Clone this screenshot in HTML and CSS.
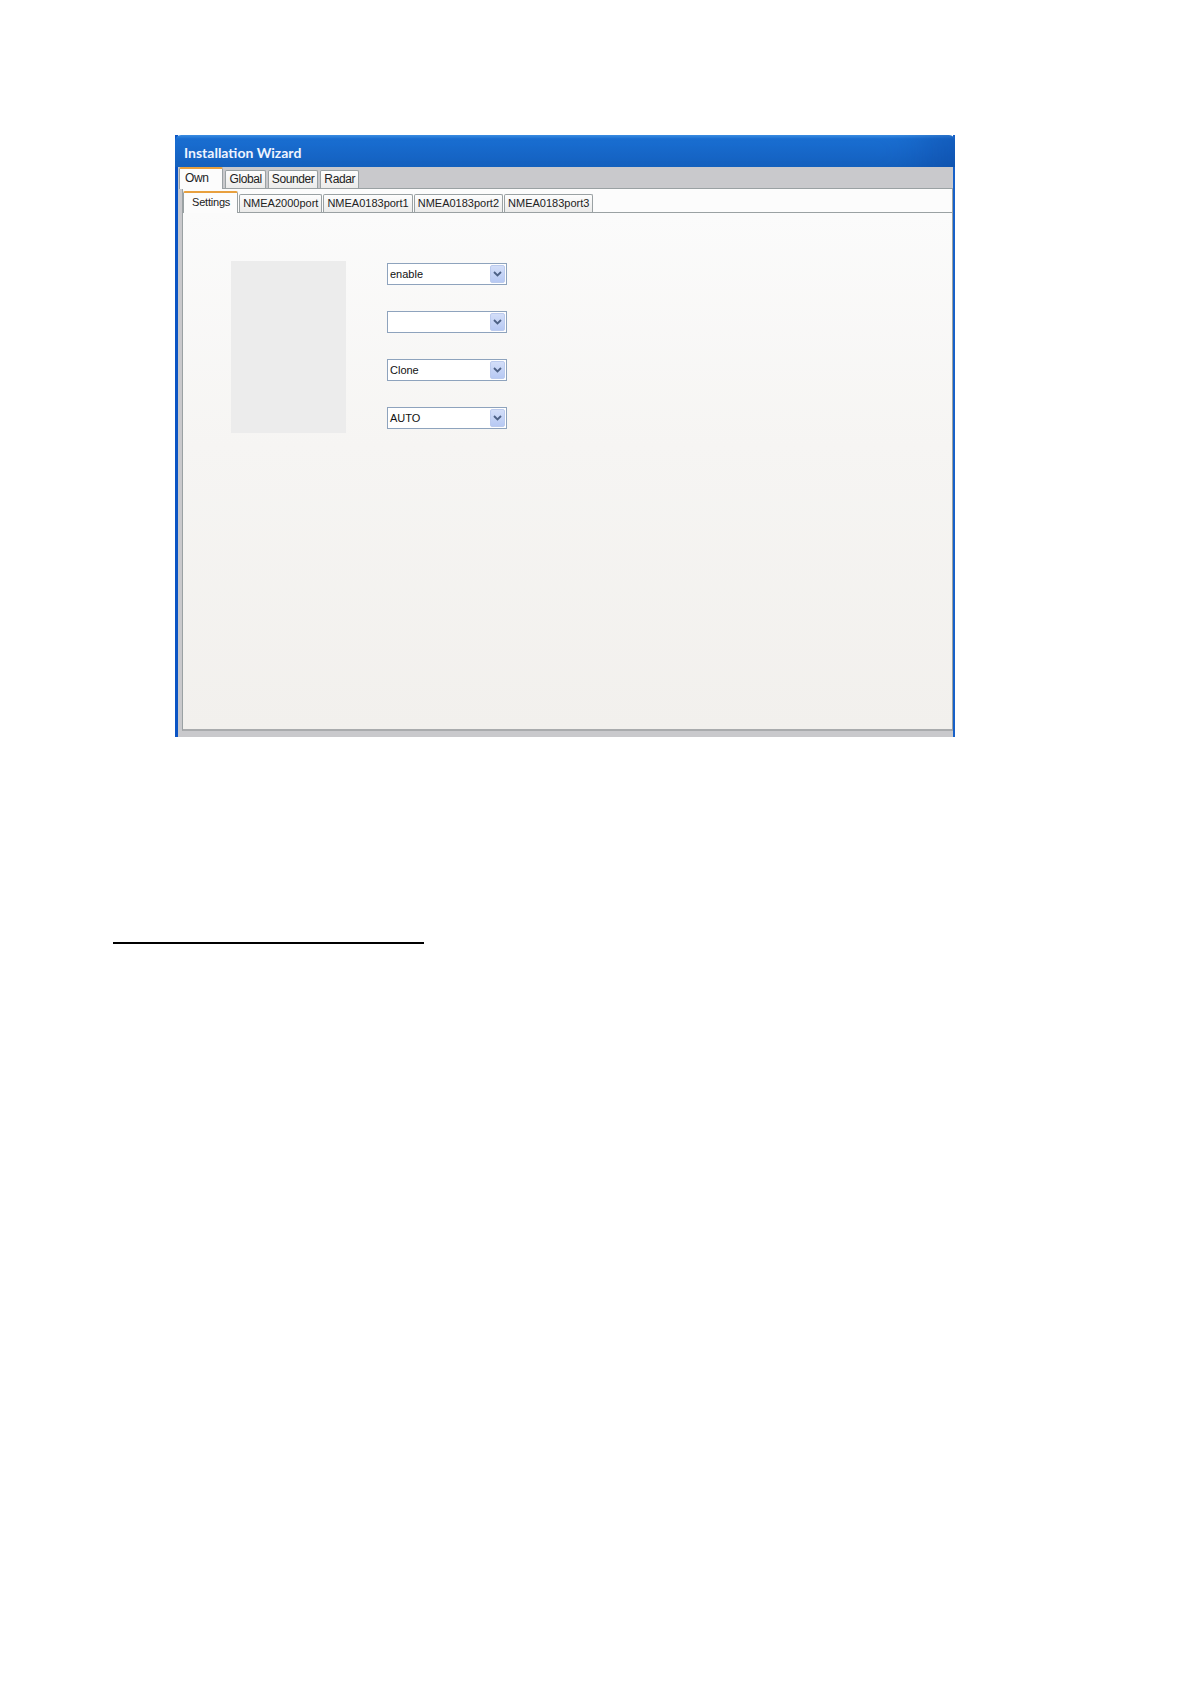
FILE: index.html
```html
<!DOCTYPE html>
<html lang="en">
<head>
  <meta charset="UTF-8">
  <meta name="viewport" content="width=device-width, initial-scale=1.0">
  <link rel="stylesheet" href="styles.css">
</head>
<body>

<div class="page">
  <!-- 설치 마법사 창 -->
  <div class="window">
    <div class="titlebar">Installation Wizard</div>
    <div class="frame">
      <div class="tabs outer-tabs">
        <span class="tab active">Own</span>
        <span class="tab">Global</span>
        <span class="tab">Sounder</span>
        <span class="tab">Radar</span>
      </div>
      <div class="panel">
        <div class="tabs inner-tabs">
          <span class="tab active">Settings</span>
          <span class="tab">NMEA2000port</span>
          <span class="tab">NMEA0183port1</span>
          <span class="tab">NMEA0183port2</span>
          <span class="tab">NMEA0183port3</span>
        </div>
        <div class="tab-body">
          <div class="preview"></div>
          <div class="fields">
            <div class="combo">
              <span class="combo-text">enable</span>
              <span class="combo-btn"><svg viewBox="0 0 9 6" width="9" height="6"><path d="M1 1 L4.5 4.5 L8 1" fill="none" stroke="#4d6185" stroke-width="1.8"/></svg></span>
            </div>
            <div class="combo">
              <span class="combo-text"></span>
              <span class="combo-btn"><svg viewBox="0 0 9 6" width="9" height="6"><path d="M1 1 L4.5 4.5 L8 1" fill="none" stroke="#4d6185" stroke-width="1.8"/></svg></span>
            </div>
            <div class="combo">
              <span class="combo-text">Clone</span>
              <span class="combo-btn"><svg viewBox="0 0 9 6" width="9" height="6"><path d="M1 1 L4.5 4.5 L8 1" fill="none" stroke="#4d6185" stroke-width="1.8"/></svg></span>
            </div>
            <div class="combo">
              <span class="combo-text">AUTO</span>
              <span class="combo-btn"><svg viewBox="0 0 9 6" width="9" height="6"><path d="M1 1 L4.5 4.5 L8 1" fill="none" stroke="#4d6185" stroke-width="1.8"/></svg></span>
            </div>
          </div>
        </div>
      </div>
    </div>
  </div>

  <div class="rule"></div>
</div>

</body>
</html>
```

FILE: styles.css
```css
body {
  margin: 0;
  background: #fff;
  font-family: "Liberation Sans", Arial, sans-serif;
}

.page {
  padding-top: 135px;
}

.window {
  margin-left: 175px;
  width: 775px;
  border-left: 3px solid #0b54c4;
  border-right: 2px solid #1660c8;
}

.titlebar {
  height: 32px;
  box-sizing: border-box;
  padding: 3px 0 0 9px;
  line-height: 29px;
  margin-left: -3px;
  margin-right: -2px;
  color: #eef4ff;
  font-family: Lato, "Liberation Sans", sans-serif;
  font-weight: bold;
  font-size: 14px;
  background: linear-gradient(to bottom, #3d8fe4 0%, #1a6fd2 12%, #1767c8 60%, #1461be 100%);
  border-radius: 6px 6px 0 0;
  box-shadow: inset -60px 0 40px -30px rgba(10, 60, 150, 0.35);
}

.frame {
  background: #c9c9cc;
  padding: 0 0 6px 4px;
}

.tabs {
  display: flex;
  align-items: flex-end;
  gap: 1px;
  font-size: 11px;
  color: #222;
}

.tab {
  position: relative;
  height: 17px;
  line-height: 17px;
  padding: 0 3px;
  background: linear-gradient(to bottom, #fdfdfd, #ebebea);
  border: 1px solid #9aa1a3;
  border-bottom: none;
  border-radius: 2px 2px 0 0;
}

.tab.active {
  height: 20px;
  line-height: 19px;
  background: #fcfcfc;
  border-top: 2px solid #e8a03e;
  z-index: 1;
  margin-bottom: -1px;
}

.outer-tabs {
  height: 21px;
  margin-left: -3px;
  gap: 2px;
}

.outer-tabs .tab {
  padding: 0 3px;
  font-size: 12px;
  letter-spacing: -0.4px;
}

.outer-tabs .tab.active {
  padding: 0 14px 0 5px;
}

.panel {
  border: 1px solid #9aa1a3;
  border-bottom: 2px solid #a9abad;
  background: #fcfcfc;
  height: 540px;
  display: flex;
  flex-direction: column;
}

.inner-tabs {
  height: 23px;
  border-bottom: 1px solid #9aa1a3;
}

.inner-tabs .tab.active {
  padding: 0 7px 0 8px;
  letter-spacing: -0.2px;
}

.tab-body {
  flex: 1;
  display: flex;
  gap: 41px;
  padding: 48px 0 0 48px;
  background: linear-gradient(to bottom, #fbfbfb 0%, #f6f5f3 45%, #f2f0ed 100%);
}

.preview {
  width: 115px;
  height: 172px;
  background: #ececec;
}

.fields {
  display: flex;
  flex-direction: column;
  gap: 26px;
  padding-top: 2px;
}

.combo {
  width: 118px;
  height: 20px;
  border: 1px solid #8ea3bd;
  background: #fff;
  display: flex;
  align-items: center;
  justify-content: space-between;
  font-size: 11px;
  color: #111;
}

.combo-text {
  padding-left: 2px;
}

.combo-btn {
  width: 15px;
  height: 18px;
  margin-right: 1px;
  display: flex;
  align-items: center;
  justify-content: center;
  background: linear-gradient(to bottom, #d3def8, #b7c9f3);
  border: 1px solid #bccbee;
  box-sizing: border-box;
  border-radius: 2px;
}

.rule {
  margin: 205px 0 0 113px;
  width: 311px;
  height: 2px;
  background: #000;
}
```
